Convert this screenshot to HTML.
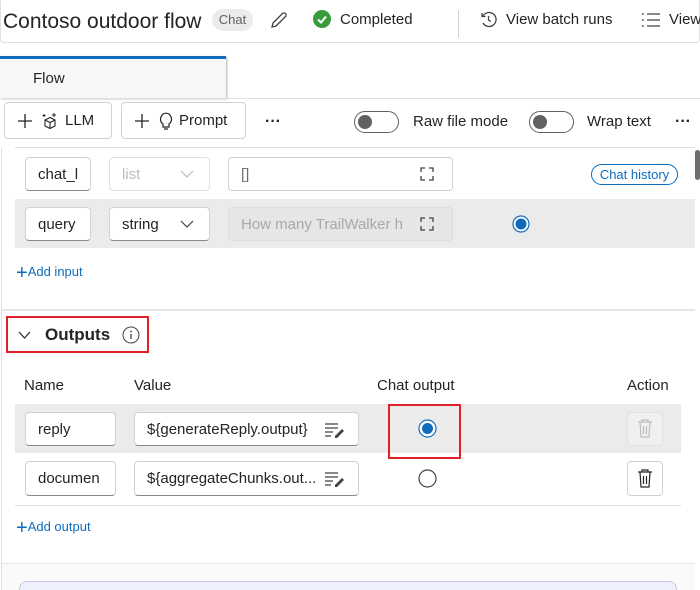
<!DOCTYPE html>
<html><head><meta charset="utf-8"><style>
*{box-sizing:border-box;margin:0;padding:0}
html,body{width:700px;height:590px;overflow:hidden}
body{background:#fff;font-family:"Liberation Sans",sans-serif;color:#242424;position:relative;font-size:14px}
.a{position:absolute}
.box{position:absolute;border:1px solid #d1d1d1;border-bottom-color:#8a8a8a;border-radius:4px;background:#fff;font-size:15px;display:flex;align-items:center;padding-left:12px;white-space:nowrap;overflow:hidden}
.btn{position:absolute;border:1px solid #d1d1d1;border-radius:4px;background:#fff;display:flex;align-items:center;font-size:15px;font-weight:500}
.tog{position:absolute;width:45px;height:22px;border:1px solid #616161;border-radius:11px}
.tog:after{content:"";position:absolute;left:3px;top:3px;width:14px;height:14px;border-radius:50%;background:#616161}
.link{color:#0f6cbd;font-size:13px}
.chev{position:absolute;left:70px;top:12px}
.exp{position:absolute;left:191px;top:9px}
</style></head><body>
<div class="a" style="left:0;top:0;width:700px;height:43px;border:1px solid #e0e0e0;border-top:none;border-radius:0 0 4px 4px"></div>
<div class="a" style="left:3px;top:10px;font-size:21px;font-weight:500">Contoso outdoor flow</div>
<div class="a" style="left:212px;top:9px;width:41px;height:22px;border-radius:11px;background:#ebebeb;color:#616161;font-size:13px;text-align:center;line-height:22px">Chat</div>
<svg class="a" style="left:269px;top:10px" width="20" height="20" viewBox="0 0 20 20"><path d="M3 17l1-4L13.5 3.5a2 2 0 013 3L7 16z" fill="none" stroke="#424242" stroke-width="1.3"/></svg>
<svg class="a" style="left:313px;top:10px" width="18" height="18"><circle cx="9" cy="9" r="9" fill="#3a9b3a"/><path d="M5 9.5l3 3 5-6" fill="none" stroke="#fff" stroke-width="2"/></svg>
<div class="a" style="left:340px;top:11px;font-size:15px">Completed</div>
<div class="a" style="left:458px;top:10px;width:1px;height:28px;background:#d1d1d1"></div>
<svg class="a" style="left:480px;top:11px" width="17" height="17" viewBox="0 0 17 17"><path d="M3 5A7 7 0 113 12" fill="none" stroke="#424242" stroke-width="1.3"/><path d="M2 2v3.5h3.5M8.5 5v4l2.5 1.5" fill="none" stroke="#424242" stroke-width="1.3"/></svg>
<div class="a" style="left:506px;top:11px;font-size:15px">View batch runs</div>
<svg class="a" style="left:641px;top:12px" width="20" height="16"><path d="M1 2h2M1 8h2M1 14h2M6 2h13M6 8h13M6 14h13" stroke="#424242" stroke-width="1.3"/></svg>
<div class="a" style="left:669px;top:11px;font-size:15px">View</div>

<div class="a" style="left:0;top:56px;width:226px;height:42px;background:#f7f7f7;border-top:3px solid #0f6cbd;box-shadow:1px 1px 2px rgba(0,0,0,.3)"></div>
<div class="a" style="left:33px;top:70px;font-size:15px">Flow</div>
<div class="a" style="left:0;top:98px;width:700px;height:1px;background:#e0e0e0"></div>

<div class="btn" style="left:4px;top:102px;width:108px;height:37px;padding-left:12px">
<svg width="16" height="16"><path d="M8 1v14M1 8h14" stroke="#242424" stroke-width="1.3"/></svg>
<svg style="margin-left:8px" width="18" height="18" viewBox="0 0 18 18"><path d="M4 8l5-2.5 5 2.5v6l-5 2.5-5-2.5zM4 8l5 2.5 5-2.5M9 10.5v6" fill="none" stroke="#242424" stroke-width="1.1"/><path d="M13 1v4M11 3h4M3 2v3M1.5 3.5h3" stroke="#242424" stroke-width="1"/></svg>
<span style="margin-left:6px">LLM</span></div>
<div class="btn" style="left:121px;top:102px;width:125px;height:37px;padding-left:12px">
<svg width="16" height="16"><path d="M8 1v14M1 8h14" stroke="#242424" stroke-width="1.3"/></svg>
<svg style="margin-left:9px" width="14" height="18" viewBox="0 0 14 18"><path d="M4 12C1 10 1 6 2.5 4A5 5 0 0111.5 4C13 6 13 10 10 12V15H4z M5 17h4" fill="none" stroke="#242424" stroke-width="1.2"/></svg>
<span style="margin-left:6px">Prompt</span></div>
<div class="a" style="left:265px;top:113px;font-size:16px;font-weight:bold">···</div>
<div class="tog" style="left:354px;top:111px"></div>
<div class="a" style="left:413px;top:113px;font-size:15px">Raw file mode</div>
<div class="tog" style="left:529px;top:111px"></div>
<div class="a" style="left:587px;top:113px;font-size:15px">Wrap text</div>
<div class="a" style="left:675px;top:113px;font-size:16px;font-weight:bold">···</div>
<div class="a" style="left:15px;top:147px;width:680px;height:1px;background:#e0e0e0"></div>
<div class="a" style="left:1px;top:148px;width:1px;height:442px;background:#e0e0e0"></div>
<div class="a" style="left:695px;top:150px;width:5px;height:30px;background:#6e6e6e;border-radius:3px"></div>

<div class="box" style="left:25px;top:157px;width:66px;height:34px;padding-left:12px">chat_l</div>
<div class="box" style="left:109px;top:157px;width:101px;height:34px;color:#bdbdbd;border-color:#e0e0e0">list<svg class="chev" width="14" height="9"><path d="M1 1l6 6 6-6" fill="none" stroke="#bdbdbd" stroke-width="1.2"/></svg></div>
<div class="box" style="left:228px;top:157px;width:225px;height:34px;border-bottom-color:#d1d1d1;color:#707070">[]<svg class="exp" width="14" height="14"><path d="M1 5V1h4M9 1h4v4M13 9v4H9M5 13H1V9" fill="none" stroke="#424242" stroke-width="1.3"/></svg></div>
<div class="a link" style="left:591px;top:164px;width:87px;height:21px;border:1px solid #0f6cbd;border-radius:11px;text-align:center;line-height:19px">Chat history</div>
<div class="a" style="left:15px;top:199px;width:680px;height:49px;background:#ebebeb"></div>
<div class="box" style="left:25px;top:207px;width:66px;height:34px">query</div>
<div class="box" style="left:109px;top:207px;width:101px;height:34px">string<svg class="chev" width="14" height="9"><path d="M1 1l6 6 6-6" fill="none" stroke="#424242" stroke-width="1.2"/></svg></div>
<div class="box" style="left:228px;top:207px;width:225px;height:34px;background:#e6e6e6;border-color:#dcdcdc;color:#a8a8a8">How many TrailWalker h<svg class="exp" width="14" height="14"><path d="M1 5V1h4M9 1h4v4M13 9v4H9M5 13H1V9" fill="none" stroke="#424242" stroke-width="1.3"/></svg></div>
<svg class="a" style="left:512px;top:215px" width="18" height="18"><circle cx="9" cy="9" r="8" fill="#fff" stroke="#0f6cbd" stroke-width="1.2"/><circle cx="9" cy="9" r="5.5" fill="#0f6cbd"/></svg>
<div class="a link" style="left:16px;top:262px"><span style="font-size:20px;vertical-align:-3px">+</span>Add input</div>
<div class="a" style="left:2px;top:309px;width:693px;height:2px;background:#e6e6e6"></div>

<div class="a" style="left:6px;top:316px;width:143px;height:37px;border:2px solid #e3202a"></div>
<svg class="a" style="left:18px;top:331px" width="13" height="9"><path d="M1 1l5.5 6L12 1" fill="none" stroke="#242424" stroke-width="1.2"/></svg>
<div class="a" style="left:45px;top:325px;font-size:17px;font-weight:bold">Outputs</div>
<svg class="a" style="left:122px;top:326px" width="18" height="18"><circle cx="9" cy="9" r="8" fill="none" stroke="#424242"/><path d="M9 8v5" stroke="#424242" stroke-width="1.3"/><circle cx="9" cy="5.5" r="0.9" fill="#424242"/></svg>

<div class="a" style="left:24px;top:377px;font-size:15px">Name</div>
<div class="a" style="left:134px;top:377px;font-size:15px">Value</div>
<div class="a" style="left:377px;top:377px;font-size:15px">Chat output</div>
<div class="a" style="left:627px;top:377px;font-size:15px">Action</div>
<div class="a" style="left:15px;top:404px;width:666px;height:49px;background:#ebebeb"></div>
<div class="box" style="left:25px;top:412px;width:91px;height:34px">reply</div>
<div class="box" style="left:134px;top:412px;width:225px;height:34px">${generateReply.output}<svg class="a" style="left:189px;top:9px" width="22" height="16"><path d="M1 2h13M1 6h13M1 10h8M1 14h6" stroke="#424242" stroke-width="1.3"/><path d="M11 14l7-7 2 2-7 7h-2z" fill="#424242"/></svg></div>
<svg class="a" style="left:418px;top:419px" width="19" height="19"><circle cx="9.5" cy="9.5" r="8.5" fill="#fff" stroke="#0f6cbd" stroke-width="1.2"/><circle cx="9.5" cy="9.5" r="5.5" fill="#0f6cbd"/></svg>
<div class="a" style="left:388px;top:404px;width:73px;height:55px;border:2px solid #e3202a"></div>
<div class="a" style="left:627px;top:412px;width:36px;height:34px;border:1px solid #e0e0e0;border-radius:4px;background:#f0f0f0"></div>
<svg class="a" style="left:637px;top:419px" width="16" height="19"><path d="M1 3h14M5 3V1h6v2M3 3l1 15h8l1-15M6.5 7v8M9.5 7v8" fill="none" stroke="#bdbdbd" stroke-width="1.2"/></svg>
<div class="box" style="left:25px;top:461px;width:91px;height:35px">documen</div>
<div class="box" style="left:134px;top:461px;width:225px;height:35px">${aggregateChunks.out...<svg class="a" style="left:189px;top:9px" width="22" height="16"><path d="M1 2h13M1 6h13M1 10h8M1 14h6" stroke="#424242" stroke-width="1.3"/><path d="M11 14l7-7 2 2-7 7h-2z" fill="#424242"/></svg></div>
<svg class="a" style="left:418px;top:469px" width="19" height="19"><circle cx="9.5" cy="9.5" r="8.5" fill="#fff" stroke="#424242" stroke-width="1.2"/></svg>
<div class="a" style="left:627px;top:461px;width:36px;height:35px;border:1px solid #d1d1d1;border-radius:4px"></div>
<svg class="a" style="left:637px;top:469px" width="16" height="19"><path d="M1 3h14M5 3V1h6v2M3 3l1 15h8l1-15M6.5 7v8M9.5 7v8" fill="none" stroke="#242424" stroke-width="1.2"/></svg>
<div class="a" style="left:15px;top:505px;width:666px;height:1px;background:#e0e0e0"></div>
<div class="a link" style="left:16px;top:517px"><span style="font-size:20px;vertical-align:-3px">+</span>Add output</div>
<div class="a" style="left:2px;top:563px;width:693px;height:27px;background:#fafafa;border-top:1px solid #e6e6e6"></div>
<div class="a" style="left:19px;top:581px;width:658px;height:9px;border:1px solid #c7c7e8;border-bottom:none;border-radius:8px 8px 0 0;background:#eef0fc"></div>
</body></html>
